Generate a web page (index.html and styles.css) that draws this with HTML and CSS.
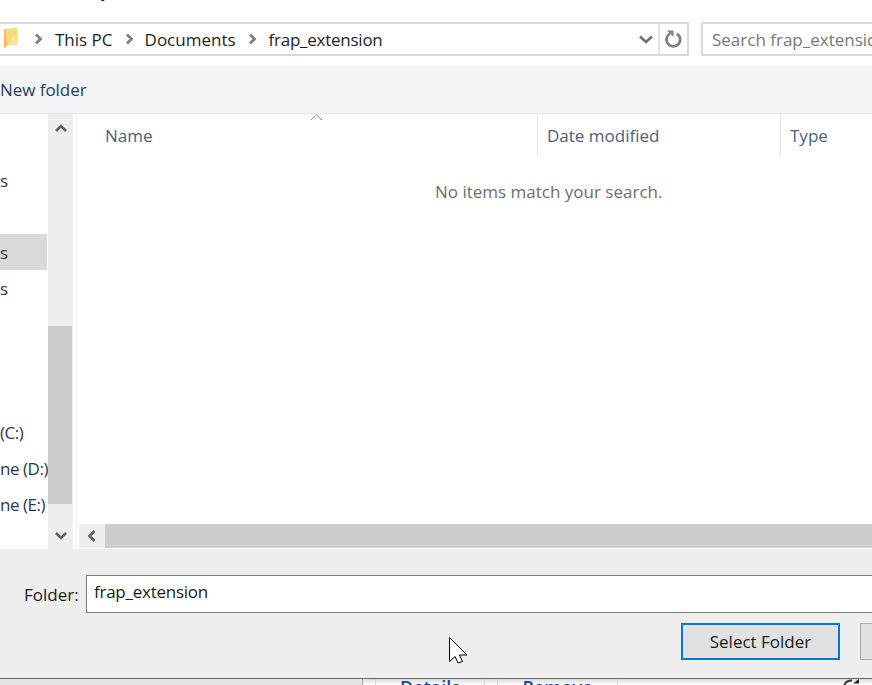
FILE: index.html
```html
<!DOCTYPE html>
<html lang="en">
<head>
<meta charset="utf-8">
<title>Select Folder</title>
<link rel="stylesheet" href="styles.css">
</head>
<body>
<div class="page">
  <div class="titlebar"><span class="title-tail">y</span></div>
  <div class="navrow">
    <div class="address">
      <svg class="folder" width="16" height="22" viewBox="0 0 16 22"><path d="M0 1h6l1-1h6.500l.5 17H3l-3 4z" fill="#f6d97f"/><path d="M0 1h1.500l2 16-3.500 4z" fill="#eec35c"/><path d="M8 8l5.500-1 .5 10H6z" fill="#fbe39a"/></svg>
      <svg class="crumb-chev first" width="9" height="12" viewBox="0 0 9 12"><path d="M2 1.500L6.500 6 2 10.500" fill="none" stroke="#808080" stroke-width="2.800"/></svg>
      <span class="crumb">This PC</span>
      <svg class="crumb-chev" width="9" height="12" viewBox="0 0 9 12"><path d="M2 1.500L6.500 6 2 10.500" fill="none" stroke="#808080" stroke-width="2.800"/></svg>
      <span class="crumb">Documents</span>
      <svg class="crumb-chev" width="9" height="12" viewBox="0 0 9 12"><path d="M2 1.500L6.500 6 2 10.500" fill="none" stroke="#808080" stroke-width="2.800"/></svg>
      <span class="crumb crumb-tight">frap_extension</span>
      <span class="spacer"></span>
      <svg class="drop" width="14" height="9" viewBox="0 0 14 9"><path d="M1 1.500L7 7l6-5.500" fill="none" stroke="#707070" stroke-width="2.600"/></svg>
      <div class="refresh">
        <svg width="18" height="18" viewBox="0 0 18 18"><path d="M11.800 3.700A6.800 6.800 0 1 1 5 3.600" fill="none" stroke="#808080" stroke-width="2.800"/><path d="M2 0.600h6.500v6.500z" fill="#808080"/></svg>
      </div>
    </div>
    <div class="search">Search frap_extension</div>
  </div>
  <div class="toolbar"><span class="newfolder">New folder</span></div>
  <div class="main">
    <div class="navpane">
      <div class="navrow-item top-gap">s</div>
      <div class="navrow-item gap-1 selected">s</div>
      <div class="navrow-item">s</div>
      <div class="navrow-item gap-3">(C:)</div>
      <div class="navrow-item">ne (D:)</div>
      <div class="navrow-item">ne (E:)</div>
    </div>
    <div class="vscroll">
      <div class="vbtn"><svg width="12" height="8" viewBox="0 0 12 8"><path d="M1 7l5-5 5 5" fill="none" stroke="#606060" stroke-width="2.600"/></svg></div>
      <div class="vtrack"><div class="vthumb"></div></div>
      <div class="vbtn vbtn-down"><svg width="12" height="8" viewBox="0 0 12 8"><path d="M1 1l5 5 5-5" fill="none" stroke="#606060" stroke-width="2.600"/></svg></div>
    </div>
    <div class="content">
      <div class="header">
        <div class="col col-name">Name
          <svg class="sort" width="13" height="7" viewBox="0 0 13 7"><path d="M1 6l5.500-5L12 6" fill="none" stroke="#8a8a8a" stroke-width="1"/></svg>
        </div>
        <div class="col col-date">Date modified</div>
        <div class="col col-type">Type</div>
      </div>
      <div class="empty">No items match your search.</div>
      <div class="hscroll">
        <div class="hbtn"><svg width="8" height="12" viewBox="0 0 8 12"><path d="M6.500 1L1.500 6l5 5" fill="none" stroke="#606060" stroke-width="2.600"/></svg></div>
        <div class="hthumb"></div>
      </div>
    </div>
  </div>
  <div class="footer">
    <div class="folder-row">
      <label class="folder-label">Folder:</label>
      <div class="folder-input">frap_extension</div>
    </div>
    <div class="button-row">
      <div class="btn btn-primary">Select Folder</div>
      <div class="btn btn-second"></div>
    </div>
  </div>
  <div class="behind">
    <div class="behind-left"></div>
    <div class="behind-btn details">Details</div>
    <div class="behind-btn remove">Remove</div>
    <svg class="behind-icon" width="20" height="6" viewBox="0 0 20 6"><path d="M1 7C2 3 5 1.500 9 1.500" fill="none" stroke="#333" stroke-width="1.800"/><path d="M10 4.500L16 0v4.500z" fill="#222"/></svg>
  </div>
  <svg class="cursor" width="20" height="28" viewBox="0 0 20 28"><path d="M.5.500v24l5.500-5 3 6.500 4.500-1.500-3-6.500H18z" fill="#fff" stroke="#000" stroke-width="1"/></svg>
</div>
</body>
</html>
```
FILE: styles.css
```css
* { box-sizing: border-box; }
html, body { margin: 0; padding: 0; background: #fff; }
.page {
  position: relative;
  width: 872px;
  height: 685px;
  overflow: hidden;
  display: flex;
  flex-direction: column;
  font-family: "Open Sans", "Noto Sans", sans-serif;
  font-size: 17px;
  color: #1a1a1a;
  background: #fff;
}
.titlebar { height: 22px; flex: none; overflow: hidden; padding-left: 101px; }
.title-tail { display: block; margin-top: -20px; line-height: 22px; }
.navrow { height: 34px; flex: none; display: flex; }
.address {
  width: 689px;
  flex: none;
  display: flex;
  align-items: center;
  border: 2px solid #d9d9d9;
  border-left: 0;
  padding-left: 4px;
}
.folder { flex: none; }
.crumb-chev { flex: none; margin: 0 11px 0 12px; }
.crumb-chev.first { margin-left: 14px; margin-right: 12px; }
.crumb { white-space: nowrap; color: #1e1e1e; }
.crumb-tight { letter-spacing: -0.25px; margin-left: 1px; }
.spacer { flex: 1; }
.drop { flex: none; margin-right: 5px; }
.refresh {
  width: 29px;
  height: 100%;
  flex: none;
  display: flex;
  align-items: center;
  justify-content: center;
  padding-left: 1px;
  border-left: 2px solid #e0e0e0;
}
.search {
  margin-left: 12px;
  flex: 1;
  display: flex;
  align-items: center;
  padding-left: 9px;
  white-space: nowrap;
  overflow: hidden;
  color: #767676;
  border: 2px solid #d9d9d9;
  border-right: 0;
}
.toolbar {
  margin-top: 9px;
  height: 49px;
  flex: none;
  display: flex;
  align-items: center;
  padding-top: 1px;
  background: #f3f4f6;
  border-bottom: 1px solid #e5e5e5;
}
.newfolder { color: #1f3d63; letter-spacing: -0.05px; }
.main { height: 435px; flex: none; display: flex; }
.navpane { width: 48px; flex: none; overflow: hidden; white-space: nowrap; background: #fff; padding-right: 1px; }
.navrow-item { height: 36px; line-height: 38px; color: #2a3a4e; letter-spacing: -0.45px; }
.top-gap { margin-top: 48px; }
.gap-1 { margin-top: 36px; }
.gap-3 { margin-top: 108px; }
.selected { background: #d9d9d9; }
.vscroll {
  width: 25px;
  flex: none;
  display: flex;
  flex-direction: column;
  background: #eeeeee;
}
.vbtn { height: 28px; flex: none; display: flex; align-items: center; justify-content: center; }
.vbtn-down { padding-top: 2px; }
.vtrack { flex: 1; padding-top: 184px; padding-right: 1px; padding-bottom: 17px; display: flex; }
.vthumb { flex: 1; background: #cdcdcd; }
.content {
  flex: 1;
  margin-left: 3px;
  min-width: 0;
  display: flex;
  flex-direction: column;
  border-left: 1px solid #f0f0f0;
}
.header { height: 41px; flex: none; display: grid; grid-template-columns: 461px 243px 1fr; grid-template-rows: 41px; }
.col { position: relative; color: #4c607a; line-height: 44px; white-space: nowrap; }
.col-name { padding-left: 28px; border-right: 1px solid #e5e5e5; }
.col-date { padding-left: 9px; border-right: 1px solid #e5e5e5; }
.col-type { padding-left: 9px; }
.sort { position: absolute; left: 233px; top: 0; }
.empty { flex: 1; padding-left: 358px; padding-top: 24px; color: #6d6d6d; line-height: 26px; white-space: nowrap; }
.hscroll { height: 24px; flex: none; margin-left: 2px; margin-bottom: 1px; display: flex; }
.hbtn { width: 26px; flex: none; display: flex; align-items: center; justify-content: center; background: #eeeeee; }
.hthumb { flex: 1; background: #cdcdcd; }
.footer { height: 129px; flex: none; background: #eeeeee; }
.folder-row { margin-top: 26px; display: flex; align-items: flex-start; padding-left: 24px; }
.folder-label { width: 62px; flex: none; line-height: 38px; margin-top: 1px; color: #1a1a1a; }
.folder-input {
  flex: 1;
  height: 38px;
  line-height: 32px;
  padding-left: 7px;
  background: #fff;
  border: 1px solid #7a7a7a;
  border-right: 0;
  color: #1a1a1a;
  letter-spacing: -0.25px;
}
.button-row { margin-top: 9px; display: flex; padding-left: 681px; gap: 20px; }
.btn { height: 37px; flex: none; display: flex; align-items: center; justify-content: center; background: #e1e1e1; color: #1a1a1a; }
.btn-primary { width: 159px; border: 2px solid #0078d7; }
.btn-second { width: 40px; border: 1px solid #adadad; }
.behind {
  position: relative;
  height: 7px;
  flex: none;
  overflow: hidden;
  display: flex;
  border-top: 1px solid #666666;
  background: linear-gradient(#dcdcdc, #ffffff);
  font-weight: 600;
  font-size: 18px;
  color: #1546a6;
}
.behind-left { width: 363px; flex: none; background: #e4e4e4; border-right: 1px solid #a8a8a8; }
.behind-btn { flex: none; height: 10px; line-height: 16px; text-align: center; border: 1px solid #c9d6e6; border-top: 0; }
.details { width: 110px; margin-left: 12px; }
.remove { width: 121px; margin-left: 12px; }
.behind-icon { position: absolute; left: 843px; top: 0; }
.cursor { position: absolute; left: 449px; top: 637px; }
```
